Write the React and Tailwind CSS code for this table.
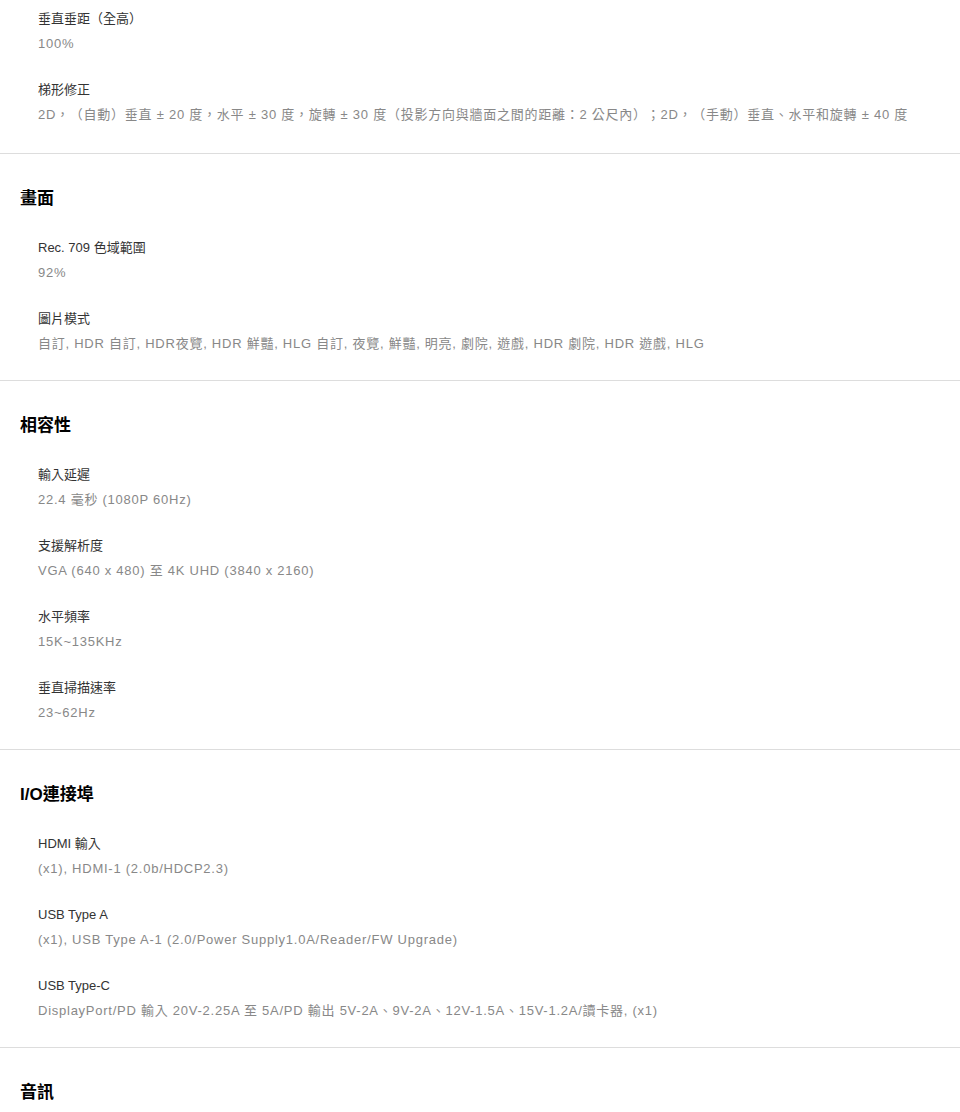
const sections = [
  {
    title: null,
    items: [
      { label: '垂直垂距（全高）', value: '100%' },
      {
        label: '梯形修正',
        value:
          '2D，（自動）垂直 ± 20 度，水平 ± 30 度，旋轉 ± 30 度（投影方向與牆面之間的距離：2 公尺內）；2D，（手動）垂直、水平和旋轉 ± 40 度',
      },
    ],
  },
  {
    title: '畫面',
    items: [
      { label: 'Rec. 709 色域範圍', value: '92%' },
      {
        label: '圖片模式',
        value:
          '自訂, HDR 自訂, HDR夜覽, HDR 鮮豔, HLG 自訂, 夜覽, 鮮豔, 明亮, 劇院, 遊戲, HDR 劇院, HDR 遊戲, HLG',
      },
    ],
  },
  {
    title: '相容性',
    items: [
      { label: '輸入延遲', value: '22.4 毫秒 (1080P 60Hz)' },
      { label: '支援解析度', value: 'VGA (640 x 480) 至 4K UHD (3840 x 2160)' },
      { label: '水平頻率', value: '15K~135KHz' },
      { label: '垂直掃描速率', value: '23~62Hz' },
    ],
  },
  {
    title: 'I/O連接埠',
    items: [
      { label: 'HDMI 輸入', value: '(x1), HDMI-1 (2.0b/HDCP2.3)' },
      { label: 'USB Type A', value: '(x1), USB Type A-1 (2.0/Power Supply1.0A/Reader/FW Upgrade)' },
      {
        label: 'USB Type-C',
        value: 'DisplayPort/PD 輸入 20V-2.25A 至 5A/PD 輸出 5V-2A、9V-2A、12V-1.5A、15V-1.2A/讀卡器, (x1)',
      },
    ],
  },
  { title: '音訊', items: [] },
];

function SpecItem({ label, value }) {
  return (
    <div className="pl-[38px]">
      <p className="text-[13px] leading-[24px] text-[#333]">{label}</p>
      <p className="text-[13px] leading-[26px] tracking-[0.75px] text-[#888]">{value}</p>
    </div>
  );
}

function SpecSection({ title, items, first }) {
  return (
    <section className={first ? 'pt-[7px] pb-[25px]' : 'border-t border-[#dddddd] pt-[33px] pb-[23px]'}>
      {title ? (
        <h2 className="mb-[25px] pl-[20px] text-[17px] font-bold leading-[24px] text-black">{title}</h2>
      ) : null}
      <div className="flex flex-col gap-[21px]">
        {items.map((item) => (
          <SpecItem key={item.label} {...item} />
        ))}
      </div>
    </section>
  );
}

export default function App() {
  return (
    <div
      className="min-h-[1112px] bg-white [text-spacing-trim:space-all]"
      style={{ fontFamily: '"Liberation Sans", Arial, "Noto Sans CJK TC", sans-serif' }}
    >
      {sections.map((section, index) => (
        <SpecSection key={section.title ?? 'top'} {...section} first={index === 0} />
      ))}
    </div>
  );
}
